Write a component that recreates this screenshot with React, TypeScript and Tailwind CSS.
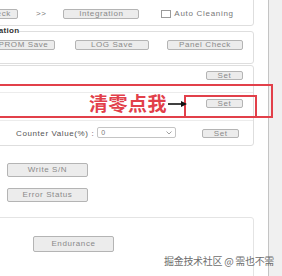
import React from "react";

const font = { fontFamily: '"Liberation Sans", Arial, sans-serif' };

function Btn({ label, className }: { label: string; className: string }) {
  return (
    <div
      className={
        "flex items-center justify-center rounded-[2px] border border-[#b4b4b4] bg-[#ececec] text-[8px] leading-none tracking-[0.6px] text-[#8a8a8a] whitespace-nowrap shrink-0 " +
        className
      }
    >
      {label}
    </div>
  );
}

export default function App() {
  return (
    <div
      className="relative flex h-[276px] w-[282px] overflow-hidden bg-white"
      style={font}
    >
      {/* main column */}
      <div className="h-full w-[268px] shrink-0 overflow-hidden">
        <div className="ml-[-30px] flex w-[284px] flex-col">
          {/* group 1 */}
          <div className="mt-[-6px] h-[32px] rounded-[3px] border border-[#dedede] pt-[14px]">
            <div className="flex items-center">
              <Btn label="Check" className="ml-[7px] h-[10px] w-[40px]" />
              <span className="ml-[18px] text-[8px] leading-none tracking-[0.5px] text-[#777]">
                &gt;&gt;
              </span>
              <Btn label="Integration" className="ml-[17px] h-[10px] w-[76px]" />
              <div className="ml-[22px] h-[8px] w-[10px] border border-[#9a9a9a] bg-white" />
              <span className="ml-[3px] text-[8px] leading-none tracking-[0.7px] text-[#777]">
                Auto Cleaning
              </span>
            </div>
          </div>

          {/* group 2 */}
          <fieldset className="mt-[1px] h-[37px] rounded-[3px] border border-[#dedede]">
            <legend className="ml-[8px] text-[8px] font-bold leading-none tracking-[0.3px] text-[#333]">
              Operation
            </legend>
            <div className="mt-[5px] flex items-center">
              <Btn label="EEPROM Save" className="ml-[9px] h-[10px] w-[75px]" />
              <Btn label="LOG Save" className="ml-[20px] h-[10px] w-[74px]" />
              <Btn label="Panel Check" className="ml-[18px] h-[10px] w-[76px]" />
            </div>
          </fieldset>

          {/* group 3 */}
          <div className="mt-[1px] flex h-[81px] flex-col rounded-[3px] border border-[#dedede]">
            <div className="flex h-[27px] items-start justify-end border-b border-[#ececec] pr-[10px] pt-[5px]">
              <Btn label="Set" className="h-[9px] w-[37px]" />
            </div>
            <div className="flex h-[28px] items-start justify-end border-b border-[#ececec] pr-[10px] pt-[6px]">
              <Btn label="Set" className="h-[9px] w-[37px]" />
            </div>
            <div className="flex flex-1 items-start pt-[6px]">
              <span className="ml-[45px] mt-[3px] text-[8px] leading-none tracking-[0.6px] text-[#555]">
                Counter Value(%) :
              </span>
              <div className="ml-[3px] flex h-[11px] w-[79px] items-center justify-between rounded-[2px] border border-[#c4c4c4] bg-white px-[3px] text-[7px] leading-none text-[#777]">
                <span>0</span>
                <svg width="6" height="4" viewBox="0 0 6 4">
                  <path d="M0.5 0.5 L3 3 L5.5 0.5" stroke="#888" strokeWidth="0.8" fill="none" />
                </svg>
              </div>
              <Btn label="Set" className="ml-[26px] mt-[2px] h-[9px] w-[37px]" />
            </div>
          </div>

          {/* loose buttons */}
          <div className="flex flex-col pl-[37px] pt-[17px]">
            <Btn label="Write S/N" className="h-[14px] w-[81px]" />
            <Btn label="Error Status" className="mt-[11px] h-[14px] w-[81px]" />
          </div>

          {/* group 4 */}
          <div className="mt-[15px] h-[80px] rounded-[3px] border border-[#e4e4e4] pl-[62px] pt-[18px]">
            <Btn label="Endurance" className="h-[16px] w-[81px]" />
          </div>
        </div>
      </div>

      {/* scrollbar strip */}
      <div className="h-full w-px shrink-0 bg-[#c4c4c4]" />
      <div className="h-full flex-1 bg-[#f0f0f0]" />

      {/* red annotation */}
      <div className="absolute left-[-4px] top-[84px] h-[34px] w-[277px] border-2 border-[#e2404a]" />
      <div className="absolute left-[184px] top-[95px] h-[23px] w-[73px] border-2 border-[#e2404a]" />
      <div
        className="absolute left-[89px] top-[93px] text-[19px] font-bold leading-none tracking-[0.5px] text-[#e2404a]"
        style={{ fontFamily: '"Noto Sans CJK SC", sans-serif' }}
      >
        清零点我
      </div>
      <svg className="absolute left-[168px] top-[100px]" width="20" height="8" viewBox="0 0 20 8">
        <line x1="0" y1="4" x2="15" y2="4" stroke="#111" strokeWidth="1.6" />
        <path d="M13 1 L19 4 L13 7 Z" fill="#111" />
      </svg>

      {/* watermark */}
      <div
        className="absolute left-[164px] top-[256px] whitespace-nowrap text-[10px] leading-none tracking-[-0.3px] text-[#6e6e6e]"
        style={{ fontFamily: '"Noto Sans CJK SC", sans-serif' }}
      >
        掘金技术社区 @ 需也不需
      </div>
    </div>
  );
}
